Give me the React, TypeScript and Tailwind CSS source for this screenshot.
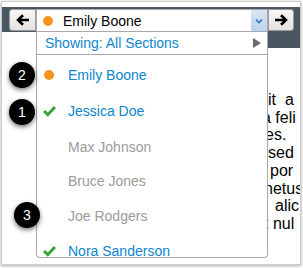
import React from "react";

const Check = () => (
  <svg width="13" height="11" viewBox="0 0 13 11">
    <polygon points="0,6 2.2,3.9 4.8,6.4 10.8,0 13,2.1 4.8,10.8" fill="#3aa03a" />
  </svg>
);

const Dot = () => <div className="w-[10px] h-[10px] rounded-full bg-[#f7941d]" />;

const ArrowIcon = ({ dir }: { dir: "l" | "r" }) => (
  <svg width="14" height="12" viewBox="0 0 14 12" style={{ transform: dir === "r" ? "scaleX(-1)" : undefined }}>
    <path d="M13 6 H2.5 M7 1.2 L2 6 L7 10.8" stroke="#000" strokeWidth="2.6" fill="none" strokeLinejoin="miter" />
  </svg>
);

const Badge = ({ n, cls }: { n: string; cls: string }) => (
  <div
    className={`absolute w-[26px] h-[26px] rounded-full bg-black text-white text-[14px] flex items-center justify-center shadow-[0_2px_5px_rgba(0,0,0,0.55)] ${cls}`}
  >
    {n}
  </div>
);

const rows: { name: string; icon: "dot" | "check" | null; blue: boolean; h: string }[] = [
  { name: "Emily Boone", icon: "dot", blue: true, h: "h-[37px]" },
  { name: "Jessica Doe", icon: "check", blue: true, h: "h-[36px]" },
  { name: "Max Johnson", icon: null, blue: false, h: "h-[35px]" },
  { name: "Bruce Jones", icon: null, blue: false, h: "h-[34px]" },
  { name: "Joe Rodgers", icon: null, blue: false, h: "h-[35px]" },
  { name: "Nora Sanderson", icon: "check", blue: true, h: "h-[36px]" },
];

export default function App() {
  return (
    <div className="w-[303px] h-[268px] bg-white relative overflow-hidden font-['Liberation_Sans',Arial,sans-serif]">
      <div className="ml-[1px] mt-[1px] w-[300px] h-[264px] border border-[#cdcdcd] shadow-[0_1px_3px_rgba(0,0,0,0.35)] bg-white flex flex-col overflow-hidden">
        <div className="h-[5px] shrink-0" />
        <div className="h-[25px] shrink-0 bg-[#4a5662] flex items-start pl-[7px] pt-[2px]">
          <div className="w-[27px] h-[22px] bg-gradient-to-b from-[#f7f7f7] to-[#e2e2e2] border border-[#9a9a9a] rounded-l-[3px] flex items-center justify-center">
            <ArrowIcon dir="l" />
          </div>
          <div className="w-[232px] h-[23px] bg-white border border-[#a8a8a8] flex items-center">
            <div className="pl-[6px]">
              <Dot />
            </div>
            <span className="ml-[10px] text-[14px] text-black leading-none flex-1">Emily Boone</span>
            <div className="w-[16px] h-full bg-gradient-to-b from-[#d8e7f5] to-[#bcd3ea] flex items-center justify-center">
              <svg width="8" height="6" viewBox="0 0 8 6">
                <path d="M1 1.5 L4 4.5 L7 1.5" stroke="#2f6fb6" strokeWidth="1.6" fill="none" />
              </svg>
            </div>
          </div>
          <div className="w-[26px] h-[22px] bg-gradient-to-b from-[#f7f7f7] to-[#e2e2e2] border border-[#9a9a9a] rounded-r-[3px] flex items-center justify-center">
            <ArrowIcon dir="r" />
          </div>
        </div>
        <div className="flex flex-1 min-h-0">
          <div className="w-[34px] shrink-0" />
          <div className="w-[232px] h-[226px] shrink-0 border-x border-b border-[#a8a8a8] rounded-b-[4px] overflow-hidden bg-white">
            <div className="h-[23px] border-b border-[#a8a8a8] flex items-center justify-between pl-[8px] pr-[6px]">
              <span className="text-[14px] text-[#0b86cd] leading-none">Showing: All Sections</span>
              <svg width="8" height="10" viewBox="0 0 8 10">
                <polygon points="0,0 8,5 0,10" fill="#6b6b6b" />
              </svg>
            </div>
            <div className="pt-[1px]">
              {rows.map((r) => (
                <div key={r.name} className={`${r.h} flex items-center`}>
                  <div className="w-[24px] flex items-center justify-center">
                    {r.icon === "dot" && <Dot />}
                    {r.icon === "check" && <Check />}
                  </div>
                  <span className={`ml-[7px] text-[14px] leading-none whitespace-nowrap ${r.blue ? "text-[#0b86cd]" : "text-[#9b9b9b]"}`}>
                    {r.name}
                  </span>
                </div>
              ))}
            </div>
          </div>
          <div className="flex-1 overflow-hidden">
            <div className="h-[16px] bg-[#4a5662]" />
            <div className="mt-[43px] text-[16px] leading-[17.7px] text-black whitespace-nowrap">
              <div className="ml-[-8px]">sit{"\u00a0\u00a0"}a</div>
              <div className="ml-[-6px]">a feli</div>
              <div className="ml-[-3px]">es.</div>
              <div className="ml-[0px]">sed</div>
              <div className="ml-[2px]">por</div>
              <div className="ml-[-4px]">netus</div>
              <div className="ml-[7px]">alic</div>
              <div className="ml-[-4px]">t nul</div>
            </div>
          </div>
        </div>
      </div>
      <Badge n="2" cls="left-[9px] top-[62px]" />
      <Badge n="1" cls="left-[9px] top-[99px]" />
      <Badge n="3" cls="left-[14px] top-[202px]" />
    </div>
  );
}
